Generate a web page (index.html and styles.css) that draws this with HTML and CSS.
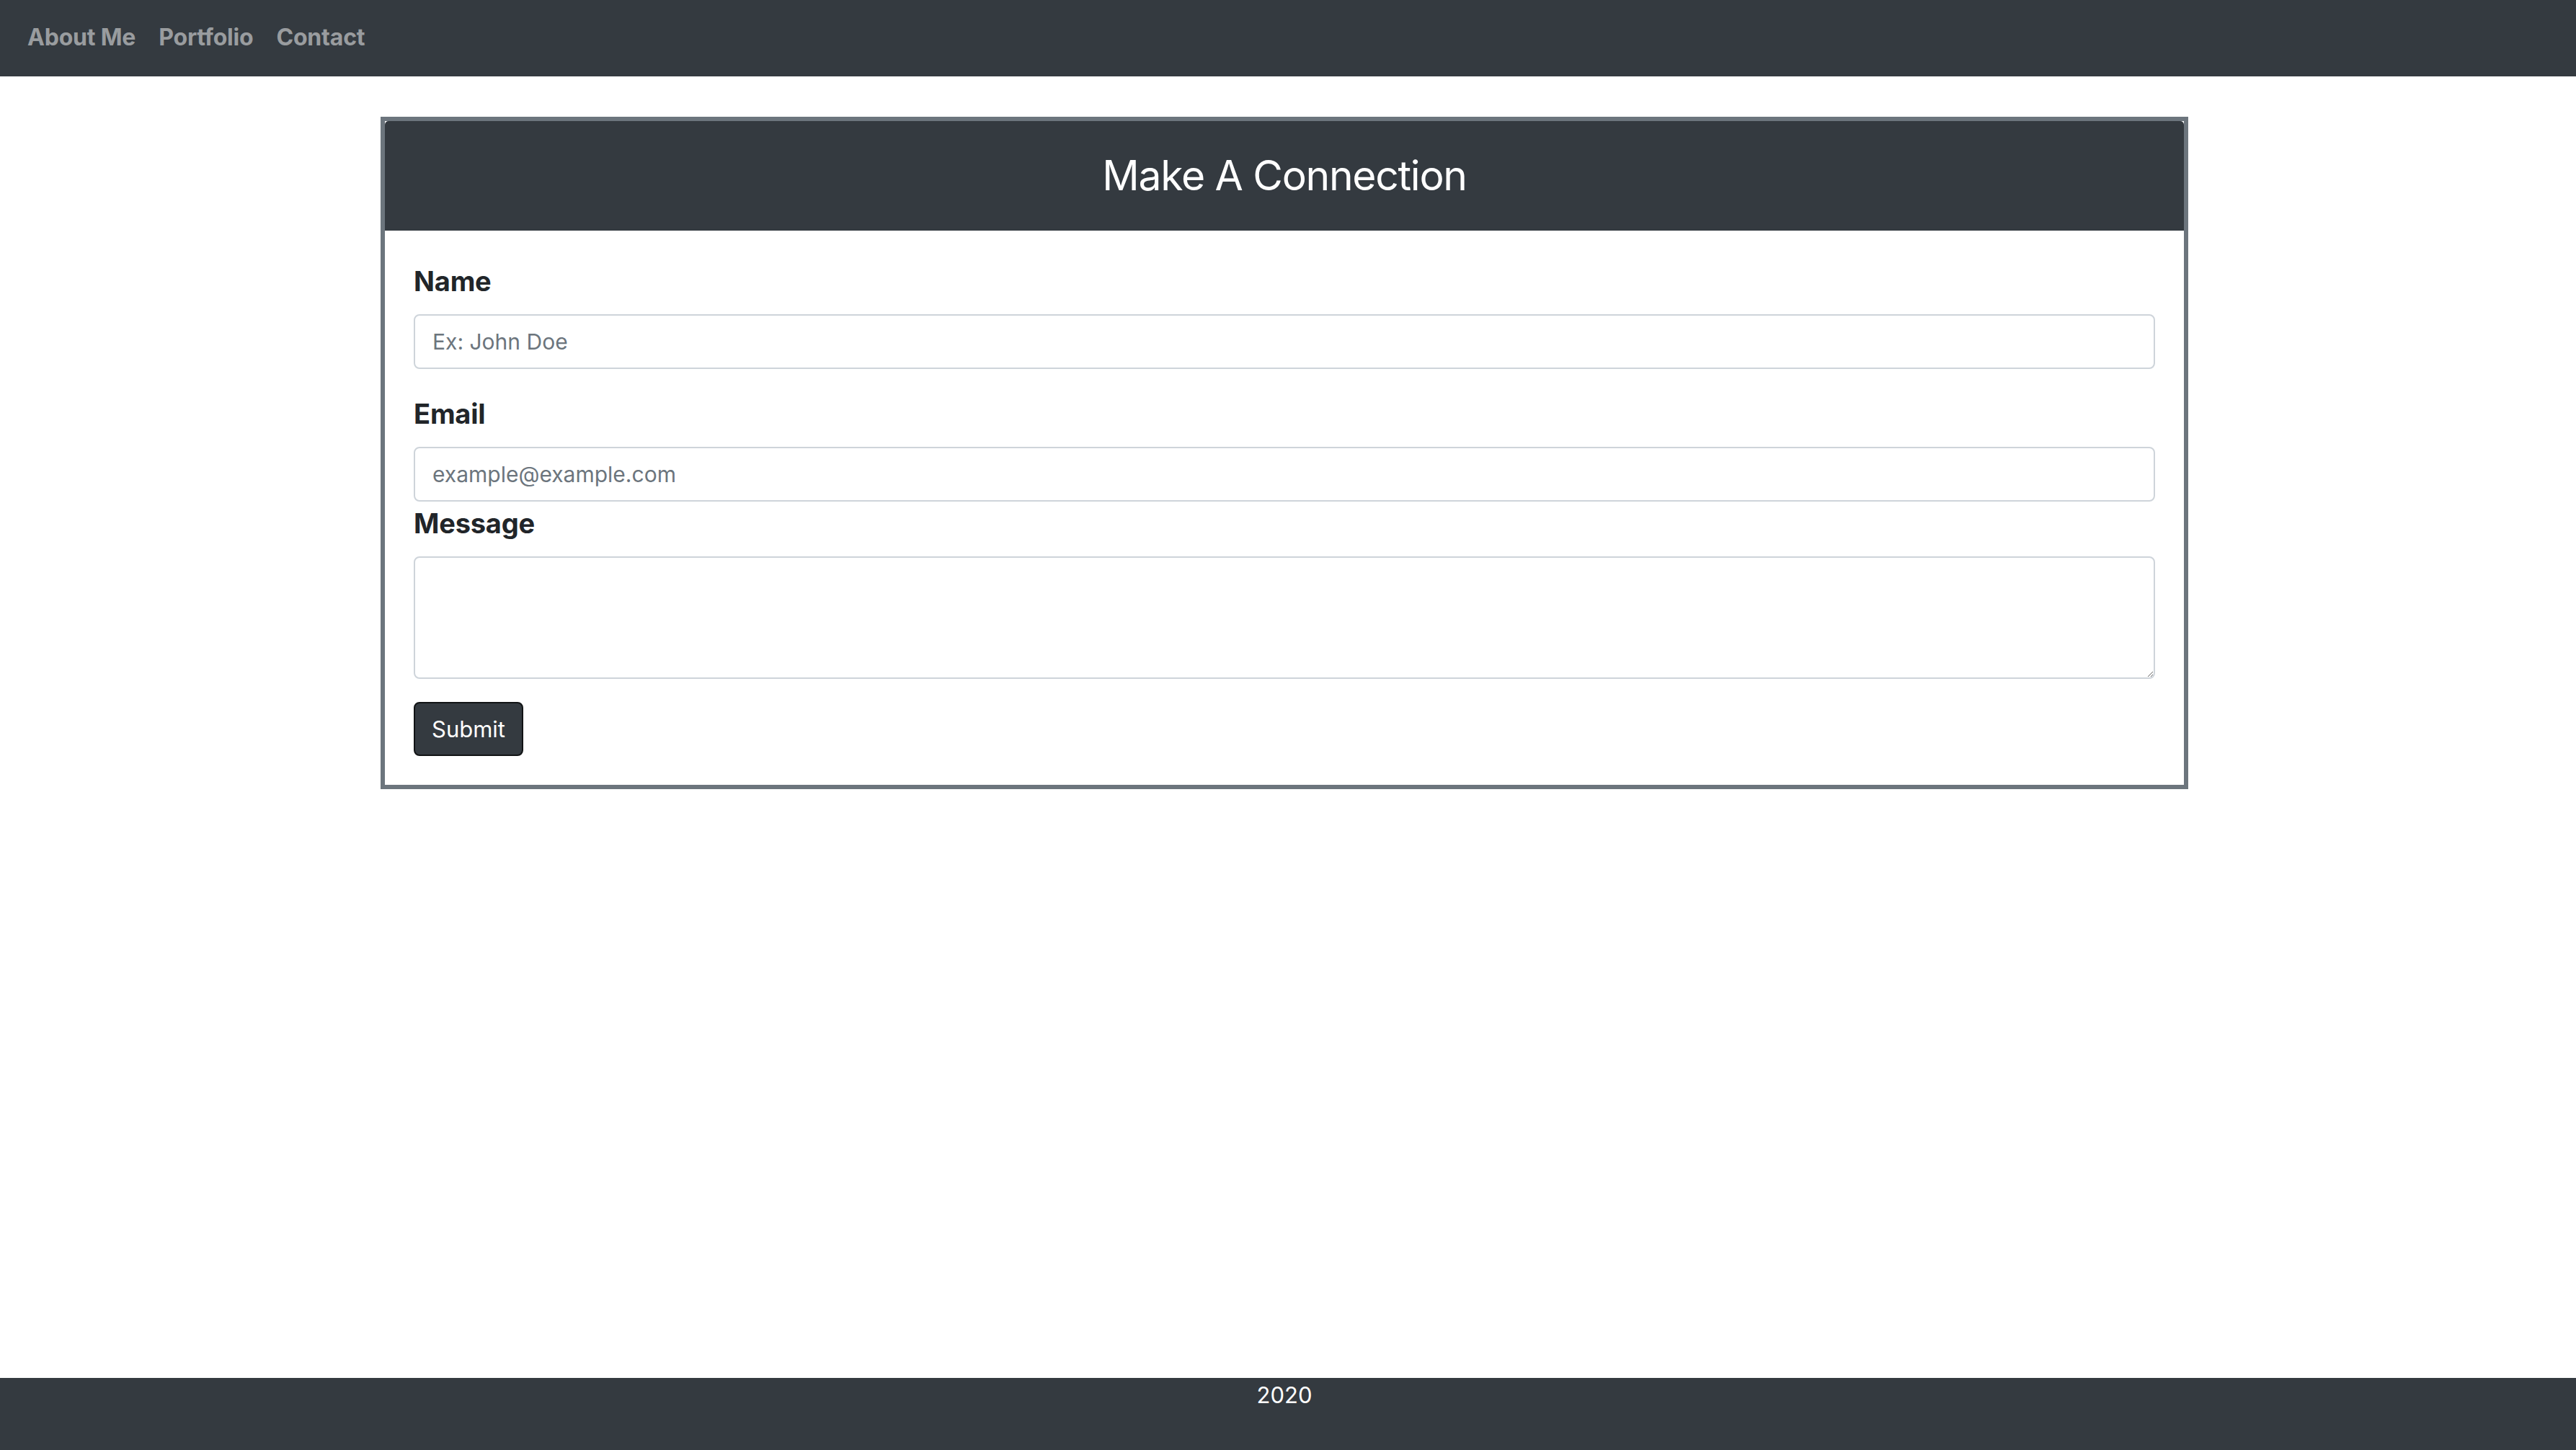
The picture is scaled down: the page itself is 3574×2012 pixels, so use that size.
FILE: index.html
```html
<!DOCTYPE html>
<html lang="en">
<head>
<meta charset="utf-8">
<title>Contact</title>
<link rel="stylesheet" href="styles.css">
</head>
<body>
<div class="page">
  <nav class="navbar">
    <a class="nav-link" href="#">About Me</a>
    <a class="nav-link" href="#">Portfolio</a>
    <a class="nav-link" href="#">Contact</a>
  </nav>

  <main class="main">
    <section class="card">
      <header class="card-header">
        <h2 class="card-title">Make A Connection</h2>
      </header>
      <form class="card-body">
        <div class="form-group">
          <label class="label" for="name">Name</label>
          <input class="control" id="name" type="text" placeholder="Ex: John Doe">
        </div>
        <div class="form-group tight">
          <label class="label" for="email">Email</label>
          <input class="control" id="email" type="email" placeholder="example@example.com">
        </div>
        <div class="form-group">
          <label class="label" for="message">Message</label>
          <textarea class="control area" id="message"></textarea>
        </div>
        <button class="btn" type="button">Submit</button>
      </form>
    </section>
  </main>

  <footer class="footer">2020</footer>
</div>
</body>
</html>
```

FILE: styles.css
```css
* { box-sizing: border-box; }

html, body {
  margin: 0;
  padding: 0;
  height: 100%;
}

body {
  font-family: Inter, "Noto Sans", "Liberation Sans", sans-serif;
  color: #212529;
  background: #ffffff;
}

.page {
  min-height: 100vh;
  display: flex;
  flex-direction: column;
}

.navbar {
  height: 106px;
  background: #343a40;
  display: flex;
  align-items: center;
  gap: 32px;
  padding: 0 0 4px 38px;
}

.nav-link {
  color: rgba(255, 255, 255, 0.5);
  text-decoration: none;
  font-weight: 700;
  font-size: 32px;
  letter-spacing: -0.2px;
}

.main {
  flex: 1;
  padding: 56px 10px 0 0;
}

.card {
  width: 2508px;
  margin: 0 auto;
  border: 6px solid #6c757d;
  background: #ffffff;
}

.card-header {
  height: 152px;
  background: #343a40;
  border-radius: 5px 5px 0 0;
  display: flex;
  align-items: center;
  justify-content: center;
}

.card-title {
  margin: 0;
  color: #ffffff;
  font-weight: 400;
  font-size: 57px;
  letter-spacing: -1.3px;
  line-height: 1.2;
}

.card-body {
  padding: 40px;
  display: flex;
  flex-direction: column;
  align-items: flex-start;
}

.form-group {
  width: 100%;
  display: flex;
  flex-direction: column;
  margin-bottom: 32px;
}

.form-group.tight { margin-bottom: 0; }

.label {
  font-weight: 700;
  font-size: 38px;
  line-height: 60px;
  margin-bottom: 16px;
  letter-spacing: -0.2px;
}

.control {
  width: 100%;
  height: 76px;
  border: 2px solid #ced4da;
  border-radius: 8px;
  padding: 0 24px;
  font-family: inherit;
  font-size: 30px;
  color: #495057;
  background: #ffffff;
  outline: none;
}

.control::placeholder {
  color: #6c757d;
  opacity: 1;
}

.area {
  height: 170px;
  padding: 12px 24px;
  resize: vertical;
}

.btn {
  height: 75px;
  padding: 0 23px;
  background: #343a40;
  color: #ffffff;
  border: 2px solid #111315;
  border-radius: 8px;
  font-family: inherit;
  font-size: 31px;
  cursor: pointer;
}

.footer {
  height: 100px;
  background: #343a40;
  color: #ffffff;
  text-align: center;
  font-size: 31px;
  line-height: 48px;
  padding-right: 10px;
}
```
